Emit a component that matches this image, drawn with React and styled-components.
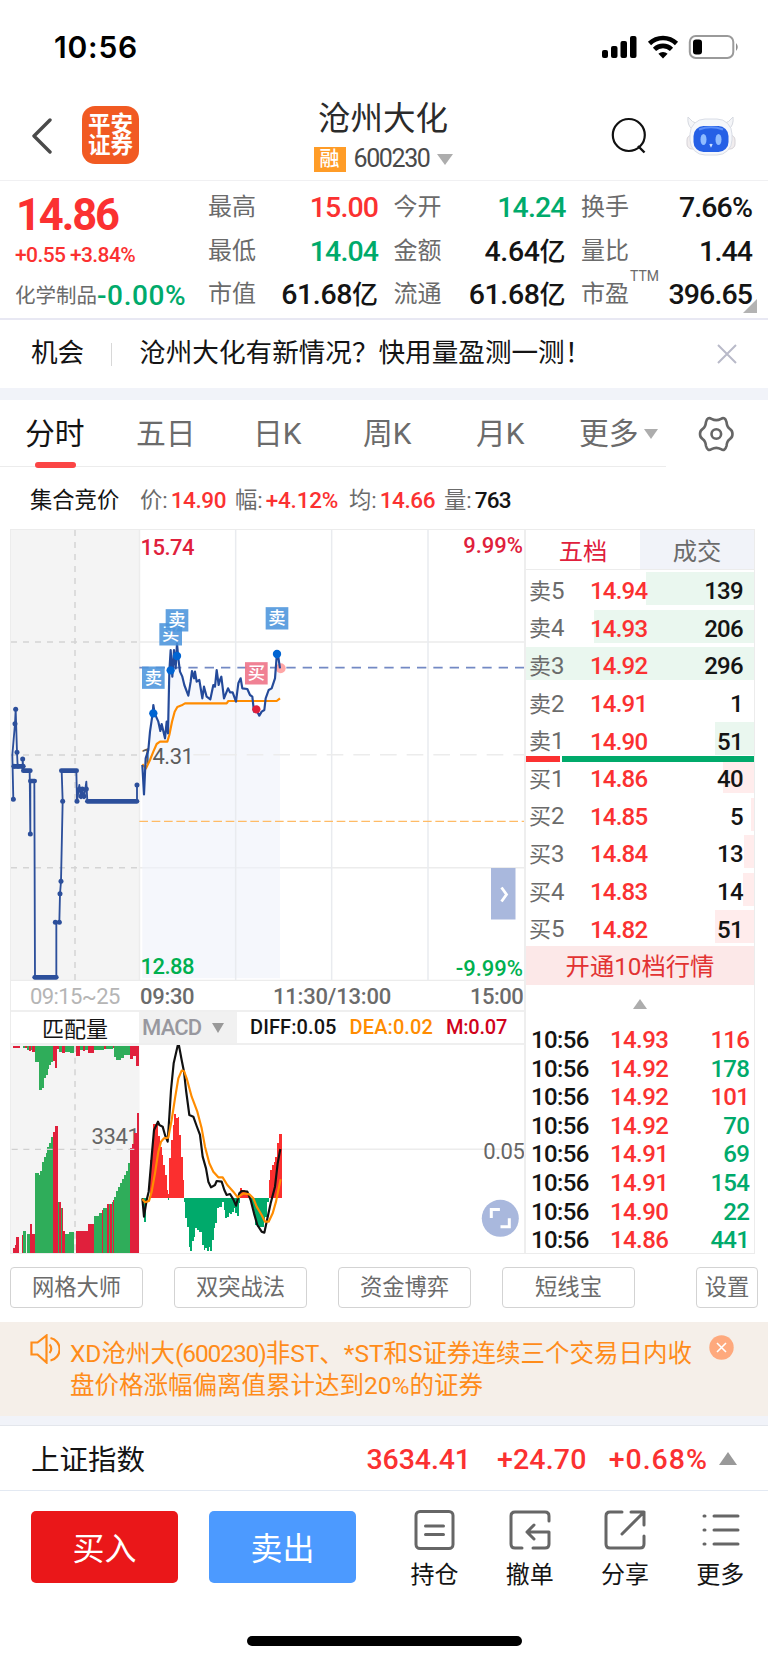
import React from 'react';
import styled, { createGlobalStyle } from 'styled-components';

const RED = '#fb3131';
const GREEN = '#00aa6b';
const INK = '#141414';
const GREY = '#6b6b6b';

const GlobalStyle = createGlobalStyle`
  * { box-sizing: border-box; }
  body {
    margin: 0;
    background: #fff;
    color: ${INK};
    font-family: Roboto, "Noto Sans CJK SC", sans-serif;
  }
`;

const Screen = styled.div`
  width: 768px;
  height: 1663px;
  overflow: hidden;
  background: #fff;
`;

const Num = styled.span`
  font-size: ${(p) => p.$size || 24}px;
  font-weight: ${(p) => p.$weight || 500};
  letter-spacing: ${(p) => p.$ls || 0}px;
  color: ${(p) => p.$color || INK};
  white-space: nowrap;
`;

const Triangle = styled.span`
  width: 0;
  height: 0;
  flex: none;
  border-left: ${(p) => p.$w / 2}px solid transparent;
  border-right: ${(p) => p.$w / 2}px solid transparent;
  ${(p) => (p.$up ? 'border-bottom' : 'border-top')}: ${(p) => p.$h}px solid ${(p) => p.$color || '#adadad'};
`;

const Band = styled.div`
  height: ${(p) => p.$h}px;
  background: #f1f3f9;
`;

// ---------------------------------------------------------------- status bar

const StatusBar = styled.div`
  height: 90px;
  padding: 0 28px 0 54px;
  display: flex;
  justify-content: space-between;
`;

const Clock = styled.div`
  font-family: Inter, sans-serif;
  font-weight: 600;
  font-size: 30px;
  line-height: 95px;
  letter-spacing: 0.8px;
  color: #000;
`;

// ---------------------------------------------------------------- header

const Header = styled.div`
  height: 91px;
  display: flex;
  justify-content: space-between;
  border-bottom: 1px solid #f0f0f2;
`;

const HeaderSide = styled.div`
  width: ${(p) => p.$w}px;
  height: 91px;
  display: flex;
  align-items: center;
  padding-left: ${(p) => p.$left}px;
  gap: ${(p) => p.$gap}px;
`;

const Logo = styled.div`
  width: 57px;
  height: 58px;
  border-radius: 13px;
  background: #f15a22;
  color: #fff;
  font-weight: 700;
  font-size: 22.5px;
  line-height: 21px;
  text-align: center;
  padding-top: 8px;
  margin-top: -1px;
`;

const TitleBlock = styled.div`
  display: flex;
  flex-direction: column;
  align-items: center;
`;

const Title = styled.div`
  font-size: 32.5px;
  line-height: 46px;
  margin-top: 6px;
  color: #2b2b2b;
`;

const SubTitle = styled.div`
  height: 30px;
  margin: 2px 0 0 1px;
  display: flex;
  align-items: center;
  line-height: 30px;
`;

const SubTitleArrow = styled.span`
  display: flex;
  margin-left: 8px;
`;

const MarginTag = styled.div`
  width: 32px;
  height: 25px;
  margin-right: 8px;
  background: #ff9c27;
  color: #fff;
  font-size: 20px;
  font-weight: 500;
  line-height: 24px;
  text-align: center;
`;

// ---------------------------------------------------------------- quote

const Quote = styled.div`
  height: 139px;
  display: flex;
  padding: 5px 0 0 15px;
  border-bottom: 2px solid #e8e8f3;
`;

const QuoteMain = styled.div`
  width: 193px;
  flex: none;
`;

const LastPrice = styled.div`
  height: 58px;
  line-height: 60px;
  padding-left: 1px;
`;

const Change = styled.div`
  height: 22px;
  line-height: 22px;
`;

const Sector = styled.div`
  height: 44px;
  margin-top: 8px;
  line-height: 44px;
  font-size: 20.5px;
  color: ${GREY};
  display: flex;
`;

const Stats = styled.div`
  display: grid;
  grid-template-columns: 170px 172px 171px;
  grid-template-rows: repeat(3, 43.7px);
  column-gap: 15.5px;
`;

const Stat = styled.div`
  display: flex;
  justify-content: space-between;
  line-height: 43.7px;
  font-size: 24px;
  color: ${GREY};
  position: relative;
`;

const Unit = styled.span`
  font-size: 26px;
  letter-spacing: 0;
`;

const Ttm = styled.span`
  position: absolute;
  left: 49px;
  top: -4px;
  font-size: 14px;
  line-height: 14px;
`;

const Corner = styled.span`
  position: absolute;
  right: -5px;
  bottom: 4px;
  border-left: 14px solid transparent;
  border-bottom: 14px solid #b3b3b3;
`;

// ---------------------------------------------------------------- opportunity

const Chance = styled.div`
  height: 68px;
  display: flex;
  align-items: center;
  padding: 0 31px 0 31px;
  font-size: 26.6px;
  white-space: nowrap;
`;

const ChanceText = styled.span`
  height: 68px;
  line-height: 66px;
`;

const ChanceLine = styled.span`
  width: 1px;
  height: 23px;
  margin: 0 27px 0 27px;
  background: #d8d8d8;
`;

const Push = styled.span`
  flex: 1;
`;

// ---------------------------------------------------------------- tabs

const Tabs = styled.div`
  height: 68px;
  display: flex;
  align-items: flex-start;
`;

const TabList = styled.div`
  width: 666px;
  height: 67px;
  display: flex;
  padding-left: 25px;
  border-bottom: 1px solid #ececec;
`;

const Tab = styled.div`
  width: ${(p) => p.$w}px;
  height: 67px;
  flex: none;
  font-size: 29.8px;
  line-height: 66px;
  color: ${(p) => (p.$active ? INK : GREY)};
  display: flex;
  align-items: center;
  gap: 5px;
  position: relative;
`;

const Underline = styled.span`
  position: absolute;
  left: 10px;
  bottom: -1px;
  width: 41px;
  height: 6px;
  border-radius: 3px;
  background: #fb4545;
`;

const InfoRow = styled.div`
  height: 61px;
  display: flex;
  align-items: center;
  padding-left: 30px;
  font-size: 22.3px;
  line-height: 61px;
  padding-top: 3px;
  white-space: nowrap;
`;

const InfoItem = styled.div`
  width: ${(p) => p.$w}px;
  flex: none;
  display: flex;
  gap: 3px;
  color: ${(p) => p.$color || GREY};
`;

// ---------------------------------------------------------------- market area

const Market = styled.div`
  height: 725px;
  margin-left: 10px;
  width: 745px;
  display: flex;
  border: 1px solid #ececec;
`;

const Charts = styled.div`
  width: 513px;
  flex: none;
`;

const Plot = styled.svg`
  display: block;
`;

const TimeAxis = styled.div`
  height: 31px;
  display: flex;
  line-height: 32px;
  border-bottom: 2px solid #efefef;
`;

const AxisCell = styled.div`
  width: ${(p) => p.$w}px;
  padding-left: ${(p) => p.$pl || 0}px;
`;

const IndicatorBar = styled.div`
  height: 33px;
  display: flex;
  line-height: 30px;
  border-bottom: 2px solid #efefef;
`;

const AuctionLabel = styled.div`
  width: 128px;
  padding-left: 31px;
  font-size: 22px;
  line-height: 35px;
`;

const MacdSelect = styled.div`
  width: 98px;
  height: 31px;
  display: flex;
  align-items: center;
  gap: 11px;
  padding-left: 3px;
  margin-right: 13px;
  background: #f1f1f1;
`;

const Values = styled.div`
  display: flex;
  gap: 13px;
`;

const Book = styled.div`
  width: 230px;
  flex: none;
  border-left: 2px solid #eee;
`;

const BookTabs = styled.div`
  height: 40px;
  display: flex;
  border-bottom: 1px solid #ececec;
`;

const BookTab = styled.div`
  flex: 1;
  font-size: 24.3px;
  line-height: 44px;
  text-align: center;
  color: ${(p) => (p.$active ? '#e0203c' : GREY)};
  background: ${(p) => (p.$active ? '#fff' : '#f1f3f9')};
`;

const Level = styled.div`
  height: 37.6px;
  display: flex;
  align-items: center;
  padding: 5px 11px 0 3px;
  line-height: 32px;
  background: linear-gradient(${(p) => (p.$sell ? '#eaf7ef, #eaf7ef' : '#ffecec, #ffecec')}) no-repeat right 2px / ${(p) => p.$bar}px 33px;
`;

const LevelName = styled.span`
  width: 61px;
  font-size: 22px;
  color: ${GREY};
`;

const LevelDigit = styled.span`
  font-size: 24px;
  font-weight: 400;
`;

const Ratio = styled.div`
  height: 6px;
  margin: -2px 0 -4px;
  display: flex;
  gap: 2px;
  position: relative;
`;

const RatioPart = styled.span`
  height: 6px;
  width: ${(p) => p.$w}px;
  background: ${(p) => p.$color};
`;

const Promo = styled.div`
  height: 39px;
  background: #fce8e8;
  color: #e23232;
  font-size: 24.3px;
  line-height: 42px;
  text-align: center;
`;

const Collapse = styled.div`
  height: 41px;
  display: flex;
  justify-content: center;
  align-items: flex-start;
  padding-top: 14px;
`;

const Tick = styled.div`
  height: 28.6px;
  line-height: 28.6px;
  display: flex;
  padding: 0 5px 0 5px;
`;

const TickCell = styled.span`
  width: ${(p) => p.$w}px;
`;

// ---------------------------------------------------------------- bottom

const Tools = styled.div`
  height: 68px;
  padding: 13px 10px 0;
  display: flex;
  justify-content: space-between;
`;

const ToolGroup = styled.div`
  display: flex;
  gap: 31px;
`;

const Tool = styled.div`
  width: ${(p) => p.$w || 133}px;
  height: 41px;
  border: 1.5px solid #d3d3d3;
  border-radius: 4px;
  text-align: center;
  font-size: 22.3px;
  line-height: 39px;
  color: ${GREY};
`;

const Notice = styled.div`
  height: 94px;
  background: #f5efe9;
  color: #ff8c1a;
  display: flex;
  padding: 12px 0 0 30px;
`;

const NoticeText = styled.div`
  width: 638px;
  margin-left: 10px;
  padding-top: 4px;
  font-size: 24.5px;
  line-height: 31.5px;
  white-space: nowrap;
`;

const Code = styled.span`
  letter-spacing: -1.1px;
`;

const IndexRow = styled.div`
  height: 66px;
  display: flex;
  align-items: center;
  padding: 0 31px;
  font-size: 28.5px;
  line-height: 64px;
  border-top: 1px solid #e3e6ec;
  border-bottom: 1px solid #e3e9f2;
`;

const IndexName = styled.span`
  padding-top: 5px;
`;

const IndexValue = styled(Num)`
  font-size: 28.5px;
  padding-top: 3px;
  margin-right: ${(p) => p.$mr}px;
`;

const Actions = styled.div`
  height: 145px;
  display: flex;
  padding: 20px 0 0 31px;
`;

const TradeButton = styled.div`
  width: 147px;
  height: 72px;
  margin-right: 31px;
  border-radius: 5px;
  background: ${(p) => p.$bg};
  color: #fff;
  font-size: 32px;
  line-height: 77px;
  text-align: center;
`;

const Action = styled.div`
  width: 95.3px;
  display: flex;
  flex-direction: column;
  align-items: center;
  font-size: 24px;
  line-height: 36px;
`;

const Icon = styled.svg`
  display: block;
  fill: none;
  flex: none;
`;

const ActionIcon = styled(Icon)`
  margin: -2px 0 6px;
  stroke: #666;
  stroke-width: 3;
  stroke-linecap: round;
  stroke-linejoin: round;
`;

const HomeBar = styled.div`
  width: 275px;
  height: 10px;
  margin: 0 auto;
  border-radius: 5px;
  background: #000;
`;

// ---------------------------------------------------------------- data

const STATS = [
  ['最高', '15.00', RED],
  ['今开', '14.24', GREEN],
  ['换手', '7.66%', INK],
  ['最低', '14.04', GREEN],
  ['金额', '4.64', INK, '亿'],
  ['量比', '1.44', INK],
  ['市值', '61.68', INK, '亿'],
  ['流通', '61.68', INK, '亿'],
  ['市盈', '396.65', INK],
];

const TABS = [['分时', 111], ['五日', 117], ['日K', 110], ['周K', 113], ['月K', 103], ['更多', 90]];

const SELLS = [['5', '14.94', 139, 108], ['4', '14.93', 206, 160], ['3', '14.92', 296, 228], ['2', '14.91', 1, 0], ['1', '14.90', 51, 39]];
const BUYS = [['1', '14.86', 40, 31], ['2', '14.85', 5, 3], ['3', '14.84', 13, 10], ['4', '14.83', 14, 11], ['5', '14.82', 51, 39]];

const TICKS = [
  ['14.93', 116, RED],
  ['14.92', 178, GREEN],
  ['14.92', 101, RED],
  ['14.92', 70, GREEN],
  ['14.91', 69, GREEN],
  ['14.91', 154, GREEN],
  ['14.90', 22, GREEN],
  ['14.86', 441, GREEN],
];

// chart series live on a grid three times finer than the screen
const PRICE = '427,720 432,808 437,700 445,675 450,620 458,565 460,540 464,565 475,590 481,618 485,597 495,640 500,590 504,625 508,440 512,375 517,455 522,375 527,430 531,355 535,400 540,440 547,455 553,480 565,512 572,470 576,438 582,460 585,440 590,470 598,465 607,520 612,485 620,515 631,523 640,480 645,485 650,435 656,480 660,465 664,455 672,520 684,490 690,502 698,502 708,530 715,475 722,460 727,490 742,492 750,510 757,515 762,560 768,553 778,572 785,560 793,555 797,520 806,495 815,490 825,460 830,395 834,390 840,430';
const AVERAGE = '427,718 438,730 450,705 460,680 470,657 480,650 502,650 508,630 516,590 524,560 532,546 545,541 555,535 680,535 685,528 830,528 840,520';
const AUCTION = '40,823 37,690 45,596 47,553 51,682 53,724 68,724 68,702 70,737 89,737 91,927 91,768 103,768 105,1357 169,1357 169,1192 178,1192 180,1106 183,1069 188,829 185,737 229,737 231,829 238,780 243,820 247,792 252,820 259,770 262,829 411,829 411,780';
const AUCTION_DOTS = [[40, 823], [45, 596], [47, 553], [51, 682], [42, 724], [54, 724], [68, 724], [68, 702], [91, 927], [166, 1192], [178, 1192], [180, 1106], [183, 1069], [188, 829], [231, 829], [238, 792], [247, 792], [259, 792], [243, 814], [252, 814], [411, 780]];
const FLATS = [[70, 737, 91], [91, 768, 104], [104, 1357, 169], [184, 737, 230], [262, 829, 411], [42, 724, 70]];

const DIFF = '427,595 432,650 440,600 446,575 455,470 462,390 474,365 478,375 488,380 495,405 503,425 508,350 513,270 521,190 533,137 537,137 545,180 552,215 558,270 568,345 580,350 590,378 600,405 608,470 618,505 625,545 633,562 645,555 650,543 665,545 673,570 680,585 690,582 700,598 708,617 718,580 725,573 742,575 752,600 762,640 772,675 785,695 793,698 800,665 812,610 825,560 833,490 841,447';
const DEA = '427,597 435,607 447,603 455,575 465,520 475,455 483,425 492,415 505,413 515,360 525,295 535,235 545,212 552,213 560,235 575,290 592,335 605,385 615,440 628,490 640,515 655,532 668,532 682,555 700,575 713,592 730,580 748,583 760,595 770,620 785,645 795,665 806,665 818,640 828,605 835,570 842,538';

const MACD_RUNS = [
  [427, [610, 665, 600]],
  [450, [480, 450, 372, 372, 372, 408, 440, 465, 495, 525, 570, 583]],
  [503, [600]],
  [508, [475, 420, 375, 342, 355, 352, 405, 470, 540]],
  [551, [605, 655, 680, 740, 752, 722, 712, 685, 690, 697, 697, 735, 750, 745, 752, 740, 752, 720, 685, 670, 625, 622, 620, 607, 630, 655, 650, 640, 642, 635, 625, 640, 647, 610]],
  [721, [563, 570, 570, 575, 582]],
  [751, [605, 625, 645, 675, 680, 680, 682, 682, 665, 650, 605]],
  [806, [540, 510, 495, 485, 470, 430, 403, 403]],
];

const R = '#e0203c';
const G = '#2fad5a';

// [x, width, edge, colour]
const VOL_BOTTOM = [
  [40, 4, 745, R], [44, 4, 735, R], [49, 9, 710, R], [67, 3, 705, R], [70, 9, 692, G], [81, 9, 703, G], [90, 6, 673, R], [96, 10, 703, R],
  [106, 10, 520, G], [116, 5, 525, G], [121, 6, 512, G], [127, 5, 485, G], [132, 5, 470, G], [137, 5, 458, G], [142, 5, 442, G], [147, 5, 430, G], [152, 6, 412, G],
  [158, 7, 396, R], [165, 8, 378, R], [173, 5, 605, G], [178, 5, 605, R], [183, 3, 625, G], [186, 4, 625, R], [190, 4, 692, R], [194, 13, 703, G], [207, 15, 697, G],
  [229, 34, 692, R], [263, 18, 673, R], [281, 15, 648, G], [296, 9, 640, G], [305, 4, 630, R], [309, 13, 625, G], [322, 4, 612, R], [326, 3, 612, G], [329, 6, 612, R], [335, 4, 605, G], [339, 4, 600, R],
  [343, 6, 590, G], [349, 6, 573, G], [355, 6, 560, G], [361, 6, 548, G], [367, 6, 538, G], [373, 6, 525, G], [379, 6, 512, G], [385, 5, 490, G],
  [390, 6, 445, R], [396, 6, 432, R], [402, 8, 400, R], [410, 7, 340, R],
];
const VOL_TOP = [
  [40, 20, 143, R], [68, 6, 144, G], [74, 8, 144, R], [82, 5, 150, G], [87, 5, 154, R], [92, 5, 150, G], [97, 9, 155, R], [106, 10, 185, G], [116, 11, 270, G], [127, 5, 265, G], [132, 5, 235, G], [137, 6, 225, G], [143, 5, 208, G], [148, 5, 195, G], [153, 6, 185, G],
  [159, 6, 182, R], [165, 7, 203, R], [172, 6, 148, R], [178, 9, 155, G], [187, 7, 160, R], [194, 16, 155, G], [210, 12, 160, G], [229, 10, 167, R], [240, 8, 150, G], [248, 8, 153, R], [256, 7, 150, G], [263, 19, 160, R],
  [282, 30, 151, G], [312, 6, 146, R], [318, 20, 146, G], [338, 5, 144, R], [343, 6, 170, G], [349, 14, 180, G], [363, 8, 174, G], [371, 19, 165, G], [390, 8, 177, R], [398, 10, 168, R], [408, 9, 197, R],
];

const MARKS = [[512, 328, '买'], [531, 286, '卖'], [460, 458, '卖'], [831, 280, '卖'], [769, 445, '买', true]];
const MARK_DOTS = [[460, 565], [512, 436], [531, 393], [831, 387]];

// ---------------------------------------------------------------- drawings

function StatusIcons() {
  return (
    <Icon width="140" height="90" viewBox="600 0 140 90">
      <g fill="#000">
        <rect x="602" y="50" width="6" height="8" rx="2" />
        <rect x="611" y="46" width="6.5" height="12" rx="2" />
        <rect x="620.5" y="41" width="6.5" height="17" rx="2" />
        <rect x="630" y="36" width="6.5" height="22" rx="2" />
        <path d="M663 58.5l-4.6-4.8a7 7 0 0 1 9.2 0z" />
      </g>
      <g stroke="#000" strokeWidth="4.6">
        <path d="M649.5 43.5a19.5 19.5 0 0 1 27 0" />
        <path d="M654.5 49.3a12.3 12.3 0 0 1 17 0" />
      </g>
      <rect x="689.8" y="36" width="43.5" height="22" rx="6" stroke="#9a9a9a" strokeWidth="2" />
      <rect x="693" y="39.5" width="9" height="15" rx="3" fill="#000" />
      <path d="M736 43q3.5 4 0 8z" fill="#8c8c8c" />
    </Icon>
  );
}

function Robot() {
  return (
    <Icon width="50" height="42" viewBox="0 0 50 42">
      <path d="M2 2Q1 10 6 14L14 10Q5 7 2 2zM47 2Q48 10 43 14L35 10Q44 7 47 2z" fill="#f4f5f8" stroke="#d6d9e0" />
      <rect x="1" y="20" width="48" height="14" rx="5" fill="#f1edee" stroke="#d6d3d8" />
      <rect x="4" y="4" width="42" height="36" rx="15" fill="#f5f7fb" stroke="#d9dde6" />
      <rect x="7.5" y="11" width="35" height="26" rx="10" fill="#2560e6" />
      <path d="M13 14.5q12-4.500 24 0" stroke="#5d8ff8" strokeWidth="2" />
      <ellipse cx="17.5" cy="24.5" rx="3" ry="5.5" fill="#8fbcff" />
      <ellipse cx="32.5" cy="24.5" rx="3" ry="5.5" fill="#8fbcff" />
      <path d="M24 29l1 2 1-2" stroke="#cfe3ff" strokeWidth="1.5" />
    </Icon>
  );
}

function PriceChart() {
  return (
    <Plot width="513" height="451" viewBox="11 530 513 451">
      <rect x="11" y="530" width="128.5" height="451" fill="#f4f4f4" />
      <g stroke="#ececec" strokeWidth="1.4">
        <path d="M139.5 530V981M139.5 642H526M139.5 867.7H526M11 980.5H526" />
      </g>
      <g stroke="#d4d4d4" strokeWidth="1.5" strokeDasharray="6 6">
        <path d="M75 530V980M11 642H139M11 755H139M11 867.7H139" />
      </g>
      <g transform="translate(0 525) scale(.33333)" fill="none" strokeLinejoin="round">
        <polygon points={`${PRICE} 840,1360 427,1360`} fill="#eef1fa" fillOpacity=".6" />
        <path d="M707 15V1365M995 15V1365M1284 15V1365" stroke="#e9ebef" strokeWidth="4.5" />
        <path d="M580 689H1578" stroke="#ececec" strokeWidth="4.5" strokeDasharray="50 30" />
        <path d="M418 428H1578" stroke="#7389c4" strokeWidth="5" strokeDasharray="28 21" />
        <path d="M418 889H1578" stroke="#ffbb66" strokeWidth="4" strokeDasharray="26 11" />
        <text x="422" y="716" fontSize="66" letterSpacing="-1.5" fill="#5c5c5c">14.31</text>
        <polyline points={AUCTION} stroke="#2c4f9b" strokeWidth="5.5" />
        {FLATS.map(([x1, y, x2]) => (
          <path key={`${x1}-${y}`} d={`M${x1} ${y}H${x2}`} stroke="#2c4f9b" strokeWidth="14" strokeLinecap="round" />
        ))}
        {AUCTION_DOTS.map(([x, y], i) => (
          <circle key={i} cx={x} cy={y} r="7.5" fill="#2c4f9b" />
        ))}
        <circle cx="842" cy="430" r="15" fill="#ffa6a6" />
        <polyline points={AVERAGE} stroke="#ff8c00" strokeWidth="6.5" />
        <polyline points={PRICE} stroke="#244a9a" strokeWidth="6.5" />
        {MARK_DOTS.map(([x, y]) => (
          <circle key={x} cx={x} cy={y} r="12.5" fill="#0064d2" />
        ))}
        <circle cx="769" cy="553" r="12.5" fill="#e0203c" />
        {MARKS.map(([x, y, label, buy]) => (
          <g key={x}>
            <rect x={x - 34} y={y - 33.5} width="68" height="67" fill={buy ? '#ee6f85' : '#4b94dc'} fillOpacity=".88" />
            <text x={x} y={y + 18} fontSize="52" fontWeight="500" textAnchor="middle" fill="#fff">{label}</text>
          </g>
        ))}
      </g>
      <g fontSize="22" fontWeight="500" letterSpacing="-.5">
        <text x="140.5" y="555" fill="#e0203c">15.74</text>
        <text x="523" y="553" fill="#e0203c" textAnchor="end" letterSpacing="0">9.99%</text>
        <text x="140.5" y="973.5" fill="#00b050">12.88</text>
        <text x="523" y="975.5" fill="#00b050" textAnchor="end" letterSpacing="0">-9.99%</text>
      </g>
      <rect x="491" y="868" width="24.5" height="51.5" fill="#a9b8dd" />
      <path d="M501.5 887.5l5 7-5 7" fill="none" stroke="#fff" strokeWidth="2.8" />
    </Plot>
  );
}

function MacdChart() {
  return (
    <Plot width="513" height="208" viewBox="11 1045 513 208">
      <rect x="11" y="1045" width="128.5" height="208" fill="#f4f4f4" />
      <path d="M139 1149.2H526" stroke="#ececec" strokeWidth="1.4" />
      <text x="91.5" y="1143.5" fontSize="22" letterSpacing="-.4" fill="#666">3341</text>
      <g transform="translate(0 1000) scale(.33333)" fill="none" strokeLinejoin="round">
        <g shapeRendering="crispEdges">
          {VOL_BOTTOM.map(([x, w, y, c]) => (
            <rect key={x} x={x} y={y} width={w} height={758 - y} fill={c} />
          ))}
          {VOL_TOP.map(([x, w, y, c]) => (
            <rect key={x} x={x} y="138" width={w} height={y - 138} fill={c} />
          ))}
        </g>
        <path d="M225 138V758M35 448H418" stroke="#d0d0d0" strokeWidth="4" strokeDasharray="18 17" />
        <g shapeRendering="crispEdges">
          {MACD_RUNS.map(([x0, run]) =>
            run.map((y, i) => (
              <rect
                key={`${x0}-${i}`}
                x={x0 + i * 5}
                y={Math.min(y, 593)}
                width="5.4"
                height={Math.abs(593 - y)}
                fill={y < 593 ? '#fb2f2f' : '#00aa6b'}
              />
            ))
          )}
        </g>
        <polyline points={DIFF} stroke="#111" strokeWidth="6.5" />
        <polyline points={DEA} stroke="#ff8c00" strokeWidth="6.5" />
      </g>
      <text x="524.5" y="1158.5" fontSize="22" letterSpacing="-.4" fill="#666" textAnchor="end">0.05</text>
      <circle cx="500.3" cy="1218.3" r="18.5" fill="#a9b8dd" />
      <path d="M491.3 1218v-8.6h8.6M500.5 1226.8h8.8v-8.6" fill="none" stroke="#fff" strokeWidth="3" />
    </Plot>
  );
}

// ---------------------------------------------------------------- sections

function BookRow({ name, level, sell }) {
  const [digit, price, volume, bar] = level;
  return (
    <Level $sell={sell} $bar={bar}>
      <LevelName>{name}<LevelDigit>{digit}</LevelDigit></LevelName>
      <Num $color={RED} $ls={-0.8}>{price}</Num>
      <Push />
      <Num $ls={-0.7}>{volume}</Num>
    </Level>
  );
}

function OrderBook() {
  return (
    <Book>
      <BookTabs>
        <BookTab $active>五档</BookTab>
        <BookTab>成交</BookTab>
      </BookTabs>
      {SELLS.map((s) => <BookRow key={s[0]} name="卖" level={s} sell />)}
      <Ratio>
        <RatioPart $w={34} $color={RED} />
        <RatioPart $w={192} $color={GREEN} />
      </Ratio>
      {BUYS.map((b) => <BookRow key={b[0]} name="买" level={b} />)}
      <Promo>开通10档行情</Promo>
      <Collapse><Triangle $up $w={14} $h={10} /></Collapse>
      {TICKS.map(([price, volume, color], i) => (
        <Tick key={i}>
          <TickCell $w={79}><Num $ls={-0.6}>10:56</Num></TickCell>
          <TickCell><Num $color={RED} $ls={-0.6}>{price}</Num></TickCell>
          <Push />
          <Num $color={color} $ls={-0.8}>{volume}</Num>
        </Tick>
      ))}
    </Book>
  );
}

export default function App() {
  return (
    <Screen>
      <GlobalStyle />
      <StatusBar>
        <Clock>10:56</Clock>
        <StatusIcons />
      </StatusBar>

      <Header>
        <HeaderSide $w={170} $left={31} $gap={29}>
          <Icon width="22" height="36" viewBox="0 0 22 36">
            <path d="M19 2L3 18l16 16" stroke="#4a4a4a" strokeWidth="3.4" strokeLinecap="round" strokeLinejoin="round" />
          </Icon>
          <Logo>平安<br />证券</Logo>
        </HeaderSide>
        <TitleBlock>
          <Title>沧州大化</Title>
          <SubTitle>
            <MarginTag>融</MarginTag>
            <Num $size={25} $weight={400} $color="#4a4a4a" $ls={-1.4}>600230</Num>
            <SubTitleArrow><Triangle $w={16} $h={11} /></SubTitleArrow>
          </SubTitle>
        </TitleBlock>
        <HeaderSide $w={172} $left={15} $gap={39}>
          <Icon width="36" height="38" viewBox="0 0 36 38">
            <circle cx="17.8" cy="18" r="16" stroke="#111" strokeWidth="2.2" />
            <path d="M27 29l6.5 6.5" stroke="#111" strokeWidth="2.4" />
          </Icon>
          <Robot />
        </HeaderSide>
      </Header>

      <Quote>
        <QuoteMain>
          <LastPrice><Num $size={43.5} $weight={700} $color={RED} $ls={-2.1}>14.86</Num></LastPrice>
          <Change><Num $size={21} $color={RED} $ls={-0.6}>+0.55 +3.84%</Num></Change>
          <Sector>
            化学制品
            <Num $size={28} $color={GREEN} $ls={0.6}>-0.00%</Num>
          </Sector>
        </QuoteMain>
        <Stats>
          {STATS.map(([label, value, color, unit]) => (
            <Stat key={label}>
              {label}
              {label === '市盈' && <Ttm>TTM</Ttm>}
              <Num $size={28.5} $color={color} $ls={unit ? -0.4 : -0.9}>{value}{unit && <Unit>{unit}</Unit>}</Num>
              {label === '市盈' && <Corner />}
            </Stat>
          ))}
        </Stats>
      </Quote>

      <Chance>
        <ChanceText>机会</ChanceText>
        <ChanceLine />
        <ChanceText>沧州大化有新情况？快用量盈测一测！</ChanceText>
        <Push />
        <Icon width="20" height="20" viewBox="0 0 20 20">
          <path d="M1 1l18 18M19 1L1 19" stroke="#b9bac9" strokeWidth="2" />
        </Icon>
      </Chance>

      <Band $h={12} />

      <Tabs>
        <TabList>
          {TABS.map(([label, w], i) => (
            <Tab key={label} $w={w} $active={i === 0}>
              {label}
              {i === 0 && <Underline />}
              {i === 5 && <Triangle $w={15} $h={10} />}
            </Tab>
          ))}
        </TabList>
        <Icon width="68" height="67" viewBox="666 400 68 67">
          <path
            d="M706 422Q707.500 416.500 711.500 418.800Q716.300 421.500 721 418.800Q725 416.500 726.500 422Q727 427 729.800 428.800Q732.500 430.500 732.500 434Q732.500 437.500 729.800 439.200Q727 441 726.500 446Q725 451.500 721 449.200Q716.300 446.500 711.500 449.200Q707.500 451.500 706 446Q705.500 441 702.700 439.200Q700 437.500 700 434Q700 430.500 702.700 428.800Q705.500 427 706 422Z"
            stroke="#666"
            strokeWidth="2.6"
          />
          <circle cx="716.3" cy="434" r="4.8" stroke="#666" strokeWidth="2.6" />
        </Icon>
      </Tabs>

      <InfoRow>
        <InfoItem $w={110} $color={INK}>集合竞价</InfoItem>
        <InfoItem $w={95}>价:<Num $size={22.5} $color={RED} $ls={-0.4}>14.90</Num></InfoItem>
        <InfoItem $w={114}>幅:<Num $size={22.5} $color={RED} $ls={-0.2}>+4.12%</Num></InfoItem>
        <InfoItem $w={95}>均:<Num $size={22.5} $color={RED} $ls={-0.4}>14.66</Num></InfoItem>
        <InfoItem $w={95}>量:<Num $size={22.5} $ls={-0.8}>763</Num></InfoItem>
      </InfoRow>

      <Market>
        <Charts>
          <PriceChart />
          <TimeAxis>
            <AxisCell $w={129} $pl={19}><Num $size={22} $weight={400} $color="#b5b5b5" $ls={-0.6}>09:15~25</Num></AxisCell>
            <AxisCell $w={133}><Num $size={22} $color={GREY} $ls={-0.3}>09:30</Num></AxisCell>
            <AxisCell $w={197}><Num $size={22} $color={GREY} $ls={-0.2}>11:30/13:00</Num></AxisCell>
            <AxisCell $w={54}><Num $size={22} $color={GREY} $ls={-0.5}>15:00</Num></AxisCell>
          </TimeAxis>
          <IndicatorBar>
            <AuctionLabel>匹配量</AuctionLabel>
            <MacdSelect>
              <Num $size={22} $color="#98989f" $ls={-0.8}>MACD</Num>
              <Triangle $w={13} $h={10} $color="#999" />
            </MacdSelect>
            <Values>
              <Num $size={20} $ls={0.1}>DIFF:0.05</Num>
              <Num $size={20} $color="#ff8c00" $ls={0.1}>DEA:0.02</Num>
              <Num $size={20} $color="#d0021b" $ls={-0.2}>M:0.07</Num>
            </Values>
          </IndicatorBar>
          <MacdChart />
        </Charts>
        <OrderBook />
      </Market>

      <Tools>
        <ToolGroup>
          <Tool>网格大师</Tool>
          <Tool>双突战法</Tool>
          <Tool>资金博弈</Tool>
          <Tool>短线宝</Tool>
        </ToolGroup>
        <Tool $w={62}>设置</Tool>
      </Tools>

      <Notice>
        <Icon width="30" height="30" viewBox="0 0 30 30">
          <path d="M1.500 8.500v12h6l9 8V1.500l-9 7zM19.500 10.500a6 6 0 0 1 0 8.500M20.500 4a11.500 11.500 0 0 1 0 22.500" stroke="#ff8c1a" strokeWidth="2.200" />
        </Icon>
        <NoticeText>
          XD沧州大<Code>(600230)</Code>非ST、*ST和S证券连续三个交易日内收<br />
          盘价格涨幅偏离值累计达到20%的证券
        </NoticeText>
        <Icon width="26" height="26" viewBox="0 0 26 26">
          <circle cx="13.5" cy="13.5" r="12.2" fill="#fea97d" />
          <path d="M9 9l9 9M18 9l-9 9" stroke="#fff" strokeWidth="1.600" />
        </Icon>
      </Notice>
      <Band $h={9} />

      <IndexRow>
        <IndexName>上证指数</IndexName>
        <Push />
        <IndexValue $color={RED} $mr={26} $ls={-0.1}>3634.41</IndexValue>
        <IndexValue $color={RED} $mr={22} $ls={0.2}>+24.70</IndexValue>
        <IndexValue $color={RED} $mr={11} $ls={1}>+0.68%</IndexValue>
        <Triangle $up $w={18} $h={13} $color="#999" />
      </IndexRow>

      <Actions>
        <TradeButton $bg="#ea1719">买入</TradeButton>
        <TradeButton $bg="#4c9aff">卖出</TradeButton>
        <Action>
          <ActionIcon width="42" height="42" viewBox="0 0 42 42">
            <rect x="2" y="2.5" width="37" height="37" rx="4" />
            <path d="M11.500 17h18M11.500 25.500h18" />
          </ActionIcon>
          持仓
        </Action>
        <Action>
          <ActionIcon width="42" height="42" viewBox="0 0 42 42">
            <path d="M40 12V7q0-4-4-4H6Q2 3 2 7v28q0 4 4 4h7M24 39h12q4 0 4-4V23H18M25 16l-7 7 7 7" />
          </ActionIcon>
          撤单
        </Action>
        <Action>
          <ActionIcon width="42" height="42" viewBox="0 0 42 42">
            <path d="M18 3H6Q2 3 2 7v28q0 4 4 4h30q4 0 4-4V27M27 3h13v13M40 3L18 25" />
          </ActionIcon>
          分享
        </Action>
        <Action>
          <ActionIcon width="42" height="42" viewBox="0 0 42 42">
            <path d="M15 7h24M15 21h24M15 35h24M5 7h1M5 21h1M5 35h1" />
          </ActionIcon>
          更多
        </Action>
      </Actions>
      <HomeBar />
    </Screen>
  );
}
